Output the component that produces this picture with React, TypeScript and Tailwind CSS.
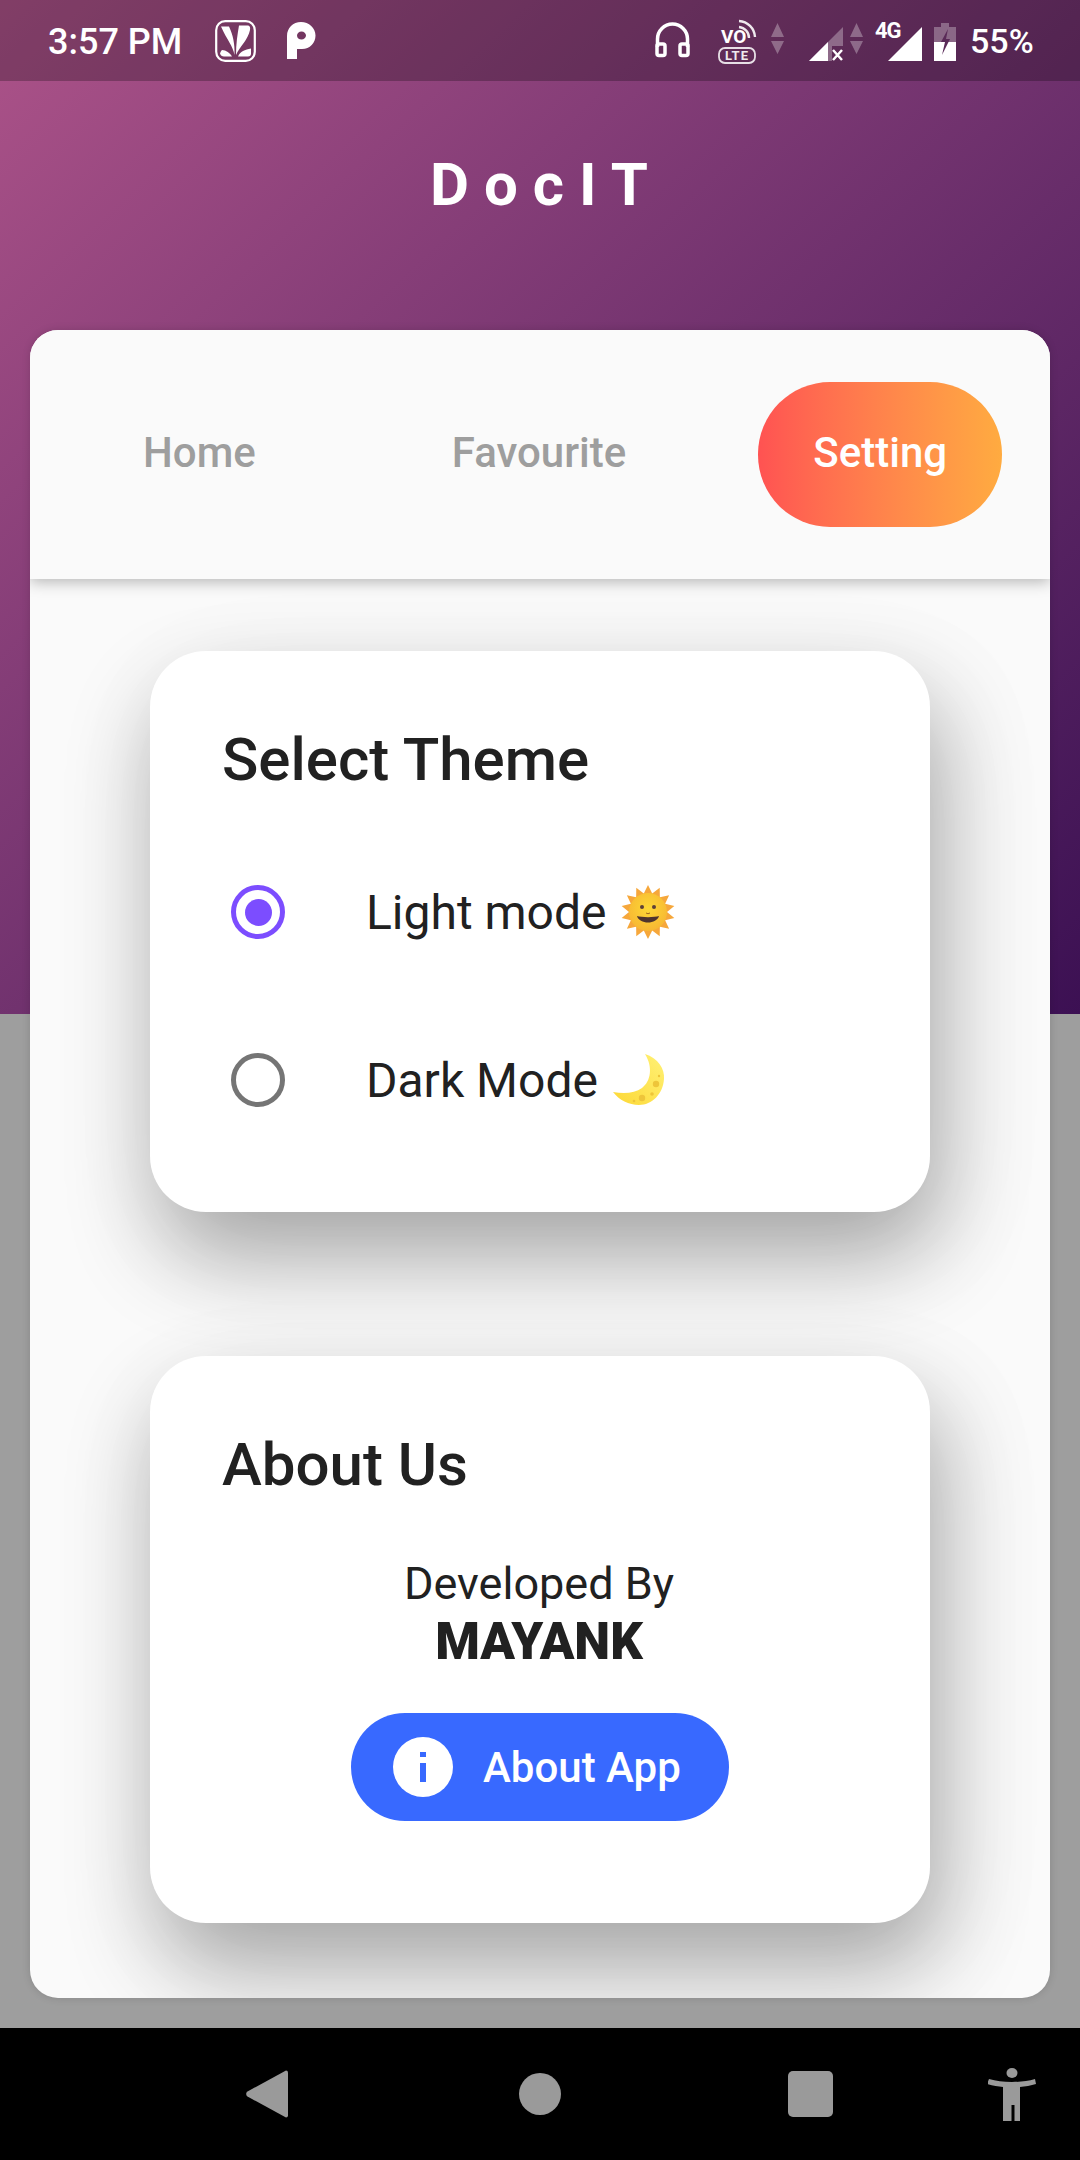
import React from "react";

function SaavnIcon() {
  return (
    <svg width="41" height="42" viewBox="0 0 41 42" fill="none">
      <rect x="1.2" y="1.2" width="38.6" height="39.6" rx="9" stroke="white" strokeWidth="2.2" />
      <path d="M19.5 35C18 26 12 20 6 6.500h8C18 15 20 24 19.5 35Z" fill="white" />
      <path d="M21 35C21 24 22.500 14 24 5.500h8c3 0 3.500 2 3 4.500C33 20 25 26 21 35Z" fill="white" />
      <path d="M17 36.500H9c-2 0-3.500-1-4-3 .5-1.500 1-2.500 2-3.500 4 0 8 3 10 6.500Z" fill="white" />
      <path d="M23 36.500h10c2 0 3-1 3-3v-5c-6 1-11 3-13 8Z" fill="white" />
    </svg>
  );
}

function PIcon() {
  return (
    <svg width="29" height="37" viewBox="0 0 29 37">
      <path
        fillRule="evenodd"
        d="M0 14C0 6 6 0 14 0c8 0 14.500 6 14.500 13.500S23 27 15 27H10v10H0ZM10 13.500c0 2.500 2 4 4.500 4s4.500-1.800 4.500-4-2-4-4.500-4-4.500 1.800-4.500 4Z"
        fill="white"
      />
    </svg>
  );
}

function StatusCluster() {
  const dim = "#ffffff";
  return (
    <svg width="310" height="50" viewBox="650 14 310 50" fill="none">
      <path d="M657.500 45V37a15 15 0 0 1 30 0v8" stroke="white" strokeWidth="3.500" />
      <rect x="657" y="42" width="8" height="11.500" rx="2" stroke="white" strokeWidth="3.500" />
      <rect x="680" y="42" width="8" height="11.500" rx="2" stroke="white" strokeWidth="3.500" />

      <text x="721" y="41" fontFamily="Roboto, sans-serif" fontSize="19" fontWeight="700" fill="white">VO</text>
      <path d="M739 25a11 11 0 0 1 10 11M739 19a17 17 0 0 1 16 16" stroke="white" strokeWidth="2.400" opacity="0.9" />
      <rect x="719" y="46" width="36" height="15" rx="6" stroke="white" strokeWidth="1.800" opacity="0.85" />
      <text x="737" y="58" textAnchor="middle" fontFamily="Roboto, sans-serif" fontSize="13" fontWeight="700" letterSpacing="1" fill="white" opacity="0.9">LTE</text>

      <path d="M771 35l6.500-14 6.500 14ZM771 39l6.500 13 6.500-13Z" fill={dim} opacity="0.3" />

      <path d="M809 59l34-34v19h-11v15Z" fill={dim} opacity="0.3" />
      <path d="M809 59l19-19v19Z" fill="white" />
      <path d="M833 48l9 10M842 48l-9 10" stroke="white" strokeWidth="2.500" />
      <path d="M850 35l6.500-14 6.500 14ZM850 39l6.500 13 6.500-13Z" fill={dim} opacity="0.3" />

      <text x="875" y="36" fontFamily="Roboto, sans-serif" fontSize="22" fontWeight="700" fill="white" letterSpacing="-1">4G</text>
      <path d="M888 59l34-34v34Z" fill="white" />

      <path d="M941 21h8v4h7v16h-22V25h7Z" fill={dim} opacity="0.3" />
      <path d="M934 40h22v19h-22Z" fill="white" />
      <path d="M948 27l-7 13h4l-3 13 8-16h-4l2-10Z" fill="#5a2a58" />
    </svg>
  );
}

function Sun() {
  const pts: string[] = [];
  const n = 14;
  for (let i = 0; i < n * 2; i++) {
    const r = i % 2 === 0 ? 27 : 19;
    const a = (Math.PI * i) / n - Math.PI / 2;
    pts.push(`${27 + r * Math.cos(a)},${27 + r * Math.sin(a)}`);
  }
  return (
    <svg width="54" height="54" viewBox="0 0 54 54">
      <defs>
        <radialGradient id="sunFace" cx="50%" cy="40%" r="60%">
          <stop offset="0%" stopColor="#fdd835" />
          <stop offset="100%" stopColor="#f7b733" />
        </radialGradient>
      </defs>
      <polygon points={pts.join(" ")} fill="#f6a73b" />
      <circle cx="27" cy="27" r="19" fill="url(#sunFace)" />
      <circle cx="21" cy="22" r="2" fill="#5d4037" />
      <circle cx="33" cy="22" r="2" fill="#5d4037" />
      <path d="M16 31c4 1.500 18 1.500 22 0-1 4-6 6.500-11 6.500S17 35 16 31Z" fill="#4e342e" />
      <path d="M25 28q2 1.500 4 0" stroke="#a1661e" strokeWidth="1" fill="none" />
    </svg>
  );
}

function Moon() {
  return (
    <svg width="54" height="54" viewBox="0 0 54 54">
      <defs>
        <linearGradient id="moonFill" x1="1" y1="0" x2="0" y2="1">
          <stop offset="0%" stopColor="#fff176" />
          <stop offset="100%" stopColor="#fdd835" />
        </linearGradient>
      </defs>
      <path d="M32 1C45 5 52 16 51 26 50 41 39 52 26 52 16 52 6 47 0 39 12 41 22 40 29 35 38 28 40 14 32 1Z" fill="url(#moonFill)" />
      <circle cx="43" cy="31" r="3.200" fill="#eec53a" />
      <circle cx="29" cy="45" r="3.200" fill="#eec53a" />
      <circle cx="39" cy="41" r="1.800" fill="#eec53a" />
      <circle cx="46" cy="23" r="1.200" fill="#eec53a" />
      <circle cx="21" cy="48" r="1.300" fill="#eec53a" />
    </svg>
  );
}

function Accessibility() {
  return (
    <svg width="48" height="53" viewBox="0 0 48 53" fill="#9a9a9a">
      <ellipse cx="24" cy="5" rx="5.500" ry="5" />
      <path d="M1 11c7 2 14 3 23 3s16-1 23-3l1 5c-5 1.500-11 2.500-16 3V53h-5.500V37h-3v16H15V19c-5-.5-11-1.500-16-3Z" />
    </svg>
  );
}

function Card({ title, children, className }: { title: string; children: React.ReactNode; className: string }) {
  return (
    <div className={`w-[780px] rounded-[56px] bg-white pt-[69px] shadow-[8px_45px_90px_rgba(0,0,0,0.31),20px_30px_120px_rgba(0,0,0,0.06)] ${className}`}>
      <div className="pl-[72px] text-[60px] leading-[80px] font-medium text-[#212121]">{title}</div>
      {children}
    </div>
  );
}

export default function App() {
  return (
    <div className="grid h-[2160px] w-[1080px] overflow-hidden font-[Roboto,sans-serif]">
      <div className="col-start-1 row-start-1 flex flex-col">
        <div className="h-[1014px] bg-linear-to-br from-[#ad5389] to-[#3c1053]" />
        <div className="flex-1 bg-[#9e9e9e]" />
      </div>

      <div className="col-start-1 row-start-1 flex flex-col">
        <div className="flex h-[81px] items-center bg-black/25 text-white">
          <span className="ml-[48px] w-[167px] pt-[2px] text-[36px] leading-none font-medium">3:57 PM</span>
          <SaavnIcon />
          <span className="ml-[31px] block h-[37px]">
            <PIcon />
          </span>
          <span className="ml-[334px] block h-[50px]">
            <StatusCluster />
          </span>
          <span className="ml-[10px] text-[34px] leading-none font-medium">55%</span>
        </div>

        <div className="flex h-[249px] items-start justify-center pt-[61px] pl-[13px]">
          <h1 className="text-[60px] leading-[86px] font-bold tracking-[15px] text-white">DocIT</h1>
        </div>

        <div className="mx-[30px] flex h-[1668px] flex-col overflow-hidden rounded-[28px] bg-[#fafafa] shadow-[0_0_8px_rgba(0,0,0,0.14)]">
          <div className="relative z-10 flex h-[249px] shrink-0 items-center bg-[#fafafa] text-[42px] font-medium text-[#9e9e9e] shadow-[0_3px_14px_rgba(0,0,0,0.28)]">
            <span className="ml-[113px] pb-[5px]">Home</span>
            <span className="ml-[196px] pb-[5px]">Favourite</span>
            <span className="ml-[132px] flex h-[145px] w-[244px] items-center justify-center rounded-[72px] bg-linear-to-r from-[#ff5252] to-[#ffab40] pb-[5px] text-white">
              Setting
            </span>
          </div>

          <div className="flex flex-col items-center pt-[72px]">
            <Card title="Select Theme" className="h-[561px]">
              <div className="mt-[85px] flex flex-col gap-[114px] pl-[81px]">
                <div className="flex items-center">
                  <span className="flex h-[54px] w-[54px] items-center justify-center rounded-full border-[5.500px] border-[#7c4dff]">
                    <span className="h-[27px] w-[27px] rounded-full bg-[#7c4dff]" />
                  </span>
                  <span className="ml-[81px] pt-[2px] text-[48px] leading-[52px] text-[#212121]">Light mode</span>
                  <span className="ml-[14px] block h-[54px]">
                    <Sun />
                  </span>
                </div>
                <div className="flex items-center">
                  <span className="h-[54px] w-[54px] rounded-full border-[5.500px] border-[#757575]" />
                  <span className="ml-[81px] pt-[2px] text-[48px] leading-[52px] text-[#212121]">Dark Mode</span>
                  <span className="ml-[15px] block h-[54px]">
                    <Moon />
                  </span>
                </div>
              </div>
            </Card>

            <Card title="About Us" className="mt-[144px] h-[567px]">
              <div className="mt-[53px] flex flex-col items-center">
                <div className="pr-[2px] text-[45px] leading-[52px] text-[#212121]">Developed By</div>
                <div className="mt-[2px] pr-[2px] text-[51px] leading-[60px] font-black text-[#212121]">MAYANK</div>
                <button className="mt-[41px] flex h-[108px] w-[378px] items-center rounded-full bg-[#3869ff] pl-[42px] text-white">
                  <span className="flex h-[60px] w-[60px] flex-col items-center justify-center rounded-full bg-white">
                    <span className="h-[5px] w-[6px] bg-[#3869ff]" />
                    <span className="mt-[6px] h-[19px] w-[6px] bg-[#3869ff]" />
                  </span>
                  <span className="ml-[30px] pt-[1px] text-[42px] font-medium">About App</span>
                </button>
              </div>
            </Card>
          </div>
        </div>

        <div className="mt-[30px] flex h-[132px] items-center bg-black">
          <svg className="ml-[246px]" width="42" height="48" viewBox="0 0 42 48" fill="#9a9a9a">
            <path d="M40 0.500a2 2 0 0 1 2 2v43a2 2 0 0 1-2 2L1.500 26.500a3 3 0 0 1 0-5Z" />
          </svg>
          <span className="ml-[231px] h-[42px] w-[42px] rounded-full bg-[#9a9a9a]" />
          <span className="ml-[227px] h-[46px] w-[45px] rounded-[5px] bg-[#9a9a9a]" />
          <span className="ml-[155px] block h-[53px]">
            <Accessibility />
          </span>
        </div>
      </div>
    </div>
  );
}
